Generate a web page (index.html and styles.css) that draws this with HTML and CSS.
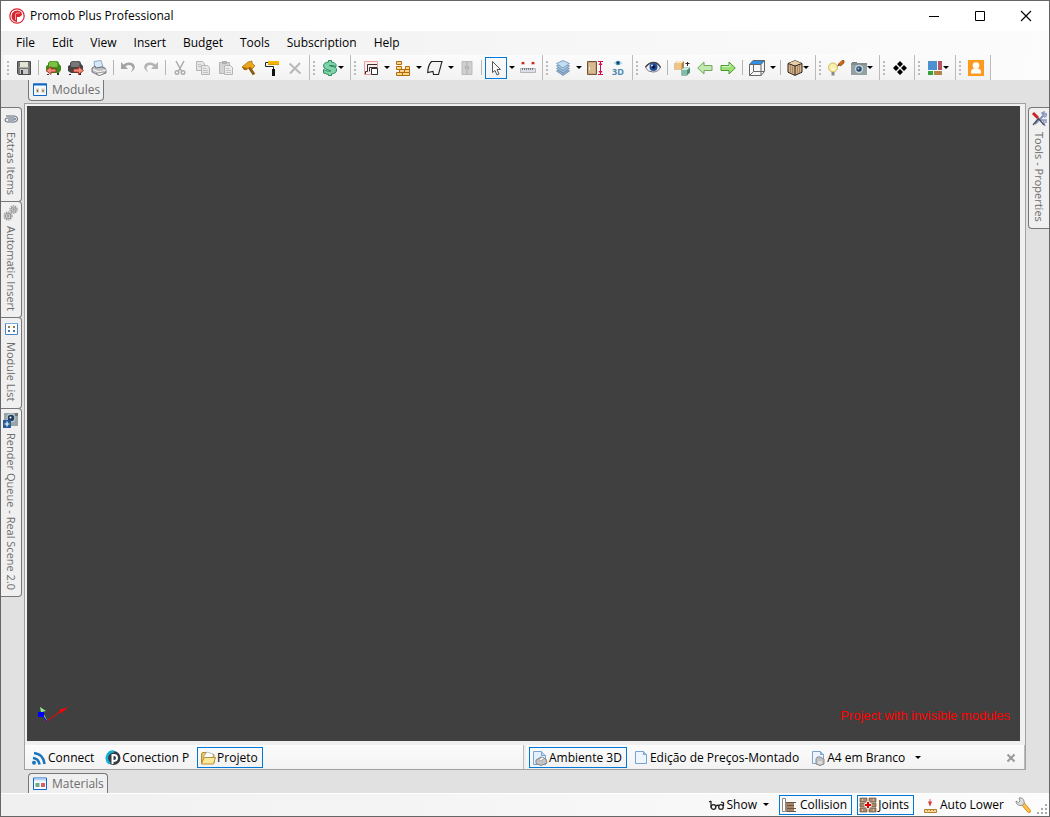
FILE: index.html
```
<!DOCTYPE html>
<html lang="en">
<head>
    <meta charset="UTF-8">
    <meta name="viewport" content="width=device-width, initial-scale=1.0">
    <title>Promob Plus Professional</title>
    <link rel="stylesheet" href="styles.css">
</head>
<body>
    <div class="window">
        <header class="titlebar">
            <svg class="icon" viewBox="0 0 16 16"><circle cx="8" cy="8" r="7.2" fill="#fff" stroke="#d8242f" stroke-width="1.2"/><path d="M6 13.500Q2.500 12 2.500 8 3 3 8 2.500q3 0 4.500 2L13 7 10.500 9H8v5z" fill="#d8242f"/><path d="M6.500 12V6.500Q6.500 5 8 5h3" fill="none" stroke="#f3a9ad" stroke-width="1"/></svg>
            <h1>Promob Plus Professional</h1>
            <div class="window-buttons">
                <button type="button" aria-label="Minimize"><svg class="icon" viewBox="0 0 16 16"><path d="M3 8.500h10" stroke="#000"/></svg></button>
                <button type="button" aria-label="Maximize"><svg class="icon" viewBox="0 0 16 16"><path d="M3.500 3.500h9v9h-9z" fill="none" stroke="#000"/></svg></button>
                <button type="button" aria-label="Close"><svg class="icon" viewBox="0 0 16 16"><path d="M3 3l10 10M13 3L3 13" stroke="#000" stroke-width="1.1"/></svg></button>
            </div>
        </header>

        <nav class="menubar">
            <button type="button">File</button>
            <button type="button">Edit</button>
            <button type="button">View</button>
            <button type="button">Insert</button>
            <button type="button">Budget</button>
            <button type="button">Tools</button>
            <button type="button">Subscription</button>
            <button type="button">Help</button>
        </nav>

        <div class="toolbar">
            <div class="group">
                <button type="button" class="tool" aria-label="Save"><svg class="icon" viewBox="0 0 16 16"><path d="M1.500 1.500h13v13h-12l-1-1z" fill="#777" stroke="#4c4c4c"/><path d="M4 2h8v5H4z" fill="#e4e4d4"/><path d="M4 9h8v5H4z" fill="#c9c9c9"/><path d="M5 10h2v4H5z" fill="#444"/><path d="M3 7.500h10" stroke="#aaa"/></svg></button>
                <span class="sep"></span>
                <button type="button" class="tool" aria-label="Import module"><svg class="icon" viewBox="0 0 16 16"><path d="M3 3q1-2 3-2h5q3 0 3 3l2 2v4l-2 3H4l-3-2V6l2-1z" fill="#3f8a1c"/><path d="M4 3q1-1.500 3-1.500h3q2 0 2.500 2V7H4z" fill="#79c142"/><path d="M3 14v1M13 13v2" stroke="#333" stroke-width="2"/><path d="M1 10.500L6 6.500V9h5v3H6v2.500z" fill="#f08c7c" stroke="#a32c1e" stroke-width=".8"/></svg></button>
                <button type="button" class="tool" aria-label="Export module"><svg class="icon" viewBox="0 0 16 16"><path d="M2 3q1-2 3-2h5q3 0 3 3l2 2v4l-2 3H3l-3-2V6l2-1z" fill="#444"/><path d="M3 3q1-1.500 3-1.500h3q2 0 2.500 2V7H3z" fill="#777"/><path d="M2 14v1M12 13v2" stroke="#222" stroke-width="2"/><path d="M15.500 10.500l-5-4V9h-5v3h5v2.500z" fill="#f08c7c" stroke="#a32c1e" stroke-width=".8"/></svg></button>
                <button type="button" class="tool" aria-label="Print"><svg class="icon" viewBox="0 0 16 16"><path d="M3 1.500l7-1 2 6-8 2z" fill="#d5e9fa" stroke="#7899b8" stroke-width=".8"/><path d="M1 8l3-2 .8 2L11 7l3 1 1 2v3l-7 2.500L1 12z" fill="#bfc1c3" stroke="#686b6e" stroke-width=".9"/><path d="M2 9.500l6 2.500 7-2" fill="none" stroke="#fff"/><path d="M5 13.500l7-1.500 2 1-6 2.500z" fill="#fff" stroke="#777" stroke-width=".7"/></svg></button>
                <span class="sep"></span>
                <button type="button" class="tool" aria-label="Undo"><svg class="icon" viewBox="0 0 16 16"><path d="M1 2v7h7L5.500 6.500Q9 4 11.500 6t-1 6.500Q16 9 14.500 5.500T8 2.500Q5.500 2.800 3.500 4.500z" fill="#a4a4a4"/></svg></button>
                <button type="button" class="tool" aria-label="Redo"><svg class="icon" viewBox="0 0 16 16"><path d="M15 2v7H8l2.500-2.500Q7 4 4.500 6t1 6.500Q0 9 1.500 5.500T8 2.500q2.500.3 4.500 2z" fill="#b3b3b3"/></svg></button>
                <span class="sep"></span>
                <button type="button" class="tool" aria-label="Cut"><svg class="icon" viewBox="0 0 16 16"><path d="M4 1l5.500 10M12 1L6.500 11" stroke="#aaa" stroke-width="1.500"/><g fill="none" stroke="#aaa" stroke-width="1.400"><circle cx="5" cy="12.500" r="1.800"/><circle cx="11" cy="12.500" r="1.800"/></g></svg></button>
                <button type="button" class="tool" aria-label="Copy"><svg class="icon" viewBox="0 0 16 16"><g fill="#e6e6e6" stroke="#b5b5b5"><path d="M1.500 1.500h6l2 2v7h-8z"/><path d="M6.500 5.500h6l2 2v7h-8z"/></g><path d="M3 4.500h3M3 6.500h3M8 8.500h3M8 10.500h5M8 12.500h5" stroke="#c4c4c4"/></svg></button>
                <button type="button" class="tool" aria-label="Paste"><svg class="icon" viewBox="0 0 16 16"><path d="M1.500 2.500h10v11h-10z" fill="#d4d4d4" stroke="#b5b5b5"/><path d="M4 1h5v3H4z" fill="#b0b0b0"/><path d="M6.500 5.500h6l2 2v7h-8z" fill="#ececec" stroke="#b5b5b5"/><path d="M8 8.500h3M8 10.500h5M8 12.500h5" stroke="#c4c4c4"/></svg></button>
                <button type="button" class="tool" aria-label="Build"><svg class="icon" viewBox="0 0 16 16"><path d="M8 7l5 7.500" stroke="#8b5b10" stroke-width="3"/><path d="M1 7l6-5 4-1v2l3 3-3 3-2-2-4 3-2-1z" fill="#eba51a" stroke="#9d6a0b" stroke-width=".7"/><path d="M1 7l2 3 2 0 2-2z" fill="#a56a08"/></svg></button>
                <button type="button" class="tool" aria-label="Paint"><svg class="icon" viewBox="0 0 16 16"><path d="M4 1h11v4H4z" fill="#f5b400"/><path d="M4 4.500h11" stroke="#d59a00"/><path d="M4 2.500H1.500v4H9.500V10" fill="none" stroke="#222"/><path d="M8 9h3v7H8z" fill="#111"/></svg></button>
                <button type="button" class="tool" aria-label="Delete"><svg class="icon" viewBox="0 0 16 16"><path d="M2.500 3.500l11 10M13 3L3 13.500" stroke="#b8b8b8" stroke-width="2"/></svg></button>
            </div>
            <div class="group">
                <button type="button" class="tool menu" aria-label="Budget"><svg class="icon" viewBox="0 0 16 16"><path d="M14 4.500Q12.500 2 9.500 2V.5h-3V2Q1.500 2.500 1.500 6q0 2.500 3.500 3.500l4 1.500L5 11 1.500 9.500V13l5 1.500v1h3v-1.500q5-.5 5-4T10 6.500L7 5.500l4 0 3 1.500z" fill="#7fd3a8" stroke="#2b8a5f"/></svg></button>
            </div>
            <div class="group">
                <button type="button" class="tool" aria-label="Walls"><svg class="icon" viewBox="0 0 16 16"><path d="M1.500 1.500h13v13h-13z" fill="#fbeeee" stroke="#f09a9a"/><path d="M2.500 14V11.500h2v-7H14M6.500 11.500v-4H14" fill="none" stroke="#333"/><path d="M8.500 8.500h6v6h-6z" fill="#fff" stroke="#333"/></svg></button>
                <button type="button" class="arrow" aria-label="Wall options"></button>
                <button type="button" class="tool" aria-label="Masonry"><svg class="icon" viewBox="0 0 16 16"><g fill="#fbd58c" stroke="#b06c08"><path d="M1.500 1.500h5v3h-5zM1.500 6.500h5v3h-5zM10.500 6.500h4v3h-4zM4.500 9.500h5v3h-5zM9.500 9.500h5v3h-5zM1.500 12.500h6v3h-6zM7.500 12.500h7v3h-7z"/></g></svg></button>
                <button type="button" class="arrow" aria-label="Masonry options"></button>
                <button type="button" class="tool" aria-label="Floor"><svg class="icon" viewBox="0 0 16 16"><path d="M4.500 1.500h10.500l-3.500 13H6.500l-.5-3L.7 12.500Q1 5 4.500 1.500z" fill="#f3f3f3" stroke="#222" stroke-width="1.100"/></svg></button>
                <button type="button" class="arrow" aria-label="Floor options"></button>
                <button type="button" class="tool" aria-label="Opening"><svg class="icon" viewBox="0 0 16 16"><path d="M3 1.500h10v13H3z" fill="#cfcfcf" stroke="#bbb"/><path d="M8 2v12M6.500 6v3M9.500 6v3" stroke="#aaa"/></svg></button>
                <span class="sep"></span>
                <button type="button" class="tool active" aria-label="Select"><svg class="icon" viewBox="0 0 16 16"><path d="M4.500 1.500v11l2.500-2 2 4.500 2-1-2-4.500h3.500z" fill="#fff" stroke="#555"/></svg></button>
                <button type="button" class="arrow" aria-label="Select options"></button>
                <button type="button" class="tool" aria-label="Measure"><svg class="icon" viewBox="0 0 16 16"><path d="M1 3.500h4M11 3.500h4" stroke="#e9b0b0" stroke-width="2"/><circle cx="3" cy="3" r="1.300" fill="#c22"/><circle cx="13" cy="3" r="1.300" fill="#c22"/><path d="M.5 8.500h15v4H.5z" fill="#dedee4" stroke="#b5b5bd"/><path d="M2.500 8v2M4.500 8v2M6.500 8v2M8.500 8v2M10.500 8v2M12.500 8v2" stroke="#778"/></svg></button>
            </div>
            <div class="group">
                <button type="button" class="tool" aria-label="Layers"><svg class="icon" viewBox="0 0 16 16"><g stroke="#6c8db0" stroke-width=".8"><path d="M1.500 11L8 8l6.500 3L8 15.500z" fill="#8fadc9"/><path d="M1.500 8.500L8 5l6.500 3.500L8 13z" fill="#9dbcd9"/><path d="M1.500 6L8 3l6.500 3L8 10.500z" fill="#aacbe8"/><path d="M1.500 3.500L8 .5l6.500 3L8 8z" fill="#c3ddf3"/></g></svg></button>
                <button type="button" class="arrow" aria-label="Layer options"></button>
                <button type="button" class="tool" aria-label="Door height"><svg class="icon" viewBox="0 0 16 16"><path d="M.5 1.500h9v13h-9z" fill="#c9a679" stroke="#765432"/><path d="M2 3h6v10H2z" fill="#d8bb93"/><path d="M2.500 7v3" stroke="#eee"/><path d="M11 1.500h5M11 14.500h5M13.500 2v12" stroke="#d40f4f"/><path d="M13.500 2l2 3h-4zM13.500 14l2-3h-4z" fill="#d40f4f"/></svg></button>
                <button type="button" class="tool" aria-label="View in 3D"><svg class="icon" viewBox="0 0 16 16"><path d="M3 3q5-4 10 0-5 4-10 0z" fill="#b9dff0"/><circle cx="8" cy="3" r="2.300" fill="#4087ae"/><circle cx="8" cy="2.800" r="1" fill="#123"/><text class="icon-text" x="2" y="15">3D</text></svg></button>
            </div>
            <div class="group">
                <button type="button" class="tool" aria-label="Visibility"><svg class="icon" viewBox="0 0 16 16"><path d="M.5 8Q3 3 8.500 3t7 4.500Q13 12 8 12T.5 8z" fill="#eef2f8" stroke="#777"/><path d="M.5 7Q4 2.500 8.500 2.500t7 5" fill="none" stroke="#444" stroke-width="1.300"/><circle cx="8.500" cy="7" r="4" fill="#264f9b"/><circle cx="8.500" cy="7" r="1.800" fill="#081530"/><circle cx="7" cy="5.500" r="1" fill="#c7dcff"/></svg></button>
                <span class="sep"></span>
                <button type="button" class="tool" aria-label="Replace"><svg class="icon" viewBox="0 0 16 16"><path d="M.5 3.500L3 1h7v6.500L7.500 10h-7z" fill="#b98545"/><path d="M.5 3.500h7V10h-7z" fill="#edc48a"/><path d="M.5 3.500L3 1h7L7.500 3.500z" fill="#ffe6bd"/><path d="M7.500 10L10 7.500h6v5L13 15.500H7.500z" fill="#4f8c74"/><path d="M7.500 10H13v5.500H7.500z" fill="#83bca4"/><path d="M7.500 10L10 7.500h6L13 10z" fill="#c9ecde"/><path d="M11.500 3.500h4M13.500 2v4" stroke="#222"/></svg></button>
                <button type="button" class="tool" aria-label="Previous"><svg class="icon" viewBox="0 0 16 16"><path d="M.7 8L7 2v3.500h8v5H7V14z" fill="#c5e8b3" stroke="#6faa5b"/></svg></button>
                <button type="button" class="tool" aria-label="Next"><svg class="icon" viewBox="0 0 16 16"><path d="M15.300 8L9 2v3.500H1v5h8V14z" fill="#9be078" stroke="#4b9a31"/><path d="M2 6.500h8V4" fill="none" stroke="#d5f5c5"/></svg></button>
                <span class="sep"></span>
                <button type="button" class="tool" aria-label="Top view"><svg class="icon" viewBox="0 0 16 16"><path d="M4 .5h11.500L12 4.500H.5z" fill="#2d8fe8"/><path d="M.5 4.500H12v11H.5zM4 .5h11.500L12 4.500H.5zM15.500.5v11L12 15.500M4.500 5v6.500H15M4.500 11.500L1 15" fill="none" stroke="#666"/></svg></button>
                <button type="button" class="arrow" aria-label="View options"></button>
                <span class="sep"></span>
                <button type="button" class="tool menu" aria-label="Textures"><svg class="icon" viewBox="0 0 16 16"><path d="M1 3.500L8 .7l7 2.800v8.700l-7 3.200-7-3.200z" fill="#d3b28a" stroke="#2b2118"/><path d="M1 3.500L8 .7l7 2.800L8 6z" fill="#ead0a9"/><path d="M1 3.500L8 6l7-2.500M8 6v9" fill="none" stroke="#2b2118"/><path d="M3.500 5.500v7M5.500 6.500v7M10.500 6v7.500M12.500 5v8" stroke="#9b7b59" stroke-width=".8"/></svg></button>
            </div>
            <div class="group">
                <button type="button" class="tool" aria-label="Lighting"><svg class="icon" viewBox="0 0 16 16"><circle cx="5" cy="7.500" r="4.500" fill="#f8eeb0" stroke="#d1b94f"/><path d="M3.500 8L5 10l1.500-2" fill="none" stroke="#fff"/><path d="M3.500 12h3v3.500h-3z" fill="#888"/><path d="M9 6.500l2-3 1.500 1.500z" fill="#333"/><path d="M10.500 4L14 .5h2V3l-3.500 3z" fill="#d66c13" stroke="#7b3905" stroke-width=".7"/></svg></button>
                <button type="button" class="tool menu" aria-label="Render"><svg class="icon" viewBox="0 0 16 16"><path d="M1 2h5v2H1z" fill="#777f80"/><path d="M0 3h16v12H0z" fill="#93a1a3"/><path d="M0 3h16v2H0z" fill="#7f8e8e"/><circle cx="8" cy="9" r="4.200" fill="#c7d6dc"/><circle cx="8" cy="9" r="2.700" fill="#29496a"/><circle cx="7.500" cy="8.500" r="1" fill="#9bd"/></svg></button>
            </div>
            <div class="group">
                <button type="button" class="tool" aria-label="Move"><svg class="icon" viewBox="0 0 16 16"><path d="M8 1l3 3-3 3-3-3zM4 5l3 3-3 3-3-3zM12 5l3 3-3 3-3-3zM8 9l3 3-3 3-3-3z" fill="#000"/></svg></button>
            </div>
            <div class="group">
                <button type="button" class="tool menu" aria-label="Window layout"><svg class="icon" viewBox="0 0 16 16"><path d="M1 1h9v9H1z" fill="#4b91d2"/><path d="M11 1h4v9h-4z" fill="#ba5360"/><path d="M1 11h5v4H1z" fill="#38a13d"/><path d="M7 11h8v4H7z" fill="#b18645"/></svg></button>
            </div>
            <div class="group">
                <button type="button" class="tool" aria-label="Account"><svg class="icon" viewBox="0 0 16 16"><path d="M0 0h16v16H0z" fill="#fc9a1e"/><circle cx="8" cy="5.500" r="3.300" fill="#fff"/><path d="M3 13.500V12q0-3 3-3.500h4q3 .5 3 3.500v1.500z" fill="#fff"/></svg></button>
            </div>
        </div>

        <div class="workspace">
            <div class="strip strip-top">
                <button type="button" class="tab tab-down"><svg class="icon" viewBox="0 0 16 16"><path d="M1.500 2h13v11.500h-13z" fill="#f4faff" stroke="#1267c4"/><path d="M1 2.500h14" stroke="#1267c4" stroke-width="2"/><path d="M4 6.500h3v4H4zM9.500 6.500h3v4h-3z" fill="#d9c7a4"/><path d="M5 8h1v2H5zM10.500 8h1v2h-1z" fill="#665"/></svg>Modules</button>
            </div>

            <div class="middle">
                <div class="side side-left">
                    <button type="button" class="tab tab-right"><svg class="icon" viewBox="0 0 16 16"><path d="M3 5h8.500q3 0 3 3t-3 3H4.500Q2 11 2 9t2.500-2H11q1.500 0 1.500 1T11 9H5" fill="none" stroke="#566579"/></svg>Extras Items</button>
                    <button type="button" class="tab tab-right"><svg class="icon" viewBox="0 0 16 16"><g fill="none" stroke="#999" stroke-width="1.200"><circle cx="10.500" cy="4.500" r="3.700" stroke-dasharray="1.500 .8"/><circle cx="10.500" cy="4.500" r="2.500"/><circle cx="10.500" cy="4.500" r=".8"/><circle cx="5" cy="11" r="4" stroke-dasharray="1.500 .8"/><circle cx="5" cy="11" r="2.700"/><circle cx="5" cy="11" r=".8"/></g></svg>Automatic Insert</button>
                    <button type="button" class="tab tab-right"><svg class="icon" viewBox="0 0 16 16"><path d="M2.500 2.500h12v11h-12z" fill="#fff" stroke="#4a86c5"/><path d="M2 2.500h13" stroke="#76aee2"/><path d="M5 5h2v2H5zM10 5h2v2h-2z" fill="#8b7a4f"/><path d="M5 9h2v2H5zM10 9h2v2h-2z" fill="#4777aa"/></svg>Module List</button>
                    <button type="button" class="tab tab-right"><svg class="icon" viewBox="0 0 16 16"><path d="M1 1h14v13H1z" fill="#98a5a6"/><path d="M12 1h3v3h-3z" fill="#687878"/><circle cx="8" cy="6" r="4.500" fill="#c5d4da"/><circle cx="8" cy="6" r="3.300" fill="#223c5d"/><circle cx="7.500" cy="5.500" r="1" fill="#fff"/><path d="M0 8h8v8H0z" fill="#245c99"/><path d="M4 9.500v5M1.500 12h5" stroke="#fff" stroke-width="1.200"/></svg>Render Queue - Real Scene 2.0</button>
                </div>

                <main class="document">
                    <div class="viewport">
                        <svg class="axes" viewBox="0 0 32 18"><path d="M10 15L4 4" stroke="#90ee90"/><path d="M3 1l6 4-5 1z" fill="#90ee90"/><path d="M10 15L5 9" stroke="#00f"/><path d="M1 6h6v5H1z" fill="#00f"/><path d="M10 15L24 5" stroke="#f00"/><path d="M31 1l-9 3 2 3.500z" fill="#f00"/></svg>
                        <p class="notice">Project with invisible modules</p>
                    </div>
                    <div class="doc-bars">
                        <div class="doc-bar">
                            <button type="button" class="doc-tab"><svg class="icon" viewBox="0 0 16 16"><g fill="none" stroke="#1b75bd" stroke-width="2.600"><path d="M2 8q5.500.5 6.500 6.500M3 3q9.500 1 10.500 11"/></g><circle cx="3" cy="12.800" r="2" fill="#1b75bd"/></svg>Connect</button>
                            <button type="button" class="doc-tab"><svg class="icon" viewBox="0 0 16 16"><circle cx="8.500" cy="8" r="7" fill="#333b44"/><path d="M9 1.500a6.500 6.500 0 0 0-4 12" fill="none" stroke="#12b0d6" stroke-width="2.600"/><path d="M7.500 14V5H9q3 0 3 3t-4 3" fill="none" stroke="#fff" stroke-width="2"/></svg>Conection P</button>
                            <button type="button" class="doc-tab active"><svg class="icon" viewBox="0 0 16 16"><path d="M1.500 13V3.500l1-1h4l1.500 2h6V13z" fill="#e6c45e" stroke="#b08e35"/><path d="M4 6l3-4 6 2v5H4z" fill="#fff" stroke="#aaa" stroke-width=".7"/><path d="M1.500 14L4 7.500h11.500l-2 6.500z" fill="#fce89a" stroke="#b3913a"/></svg>Projeto</button>
                        </div>
                        <div class="doc-bar">
                            <button type="button" class="doc-tab active"><svg class="icon" viewBox="0 0 16 16"><path d="M1.500 1.500h8l4 4v9h-12z" fill="#e3f0ff" stroke="#7ba3d0"/><path d="M9.500 1.500v4h4" fill="#bad6ef" stroke="#7ba3d0"/><path d="M4 10l5-3 5 2 1 4-6 2.500-5-2z" fill="#c4c4c4" stroke="#858585"/><path d="M7 9l4-2 1 2-4 2z" fill="#fff" stroke="#888" stroke-width=".6"/></svg>Ambiente 3D</button>
                            <button type="button" class="doc-tab"><svg class="icon" viewBox="0 0 16 16"><path d="M2.500 1.500h8l3 3v9h-11z" fill="#edf6ff" stroke="#7ba3d0"/><path d="M10.500 1.500v3h3" fill="#9fc4e8" stroke="#7ba3d0"/></svg>Edição de Preços-Montado</button>
                            <button type="button" class="doc-tab"><svg class="icon" viewBox="0 0 16 16"><path d="M2.500 1.500h8l3 3v9h-11z" fill="#edf6ff" stroke="#7ba3d0"/><path d="M10.500 1.500v3h3" fill="#9fc4e8" stroke="#7ba3d0"/><path d="M6 10q0-4 4-3l4 2v5l-4 1.500L6 14z" fill="#c0c2c5" stroke="#8b8b8b"/><path d="M8 11h4v3H8z" fill="#ddd"/></svg>A4 em Branco</button>
                            <button type="button" class="arrow" aria-label="More documents"></button>
                            <button type="button" class="doc-close" aria-label="Close document"><svg class="icon" viewBox="0 0 16 16"><path d="M4.500 4.500l7 7M11.500 4.500l-7 7" stroke="#999" stroke-width="2"/></svg></button>
                        </div>
                    </div>
                </main>

                <div class="side side-right">
                    <button type="button" class="tab tab-left"><svg class="icon" viewBox="0 0 16 16"><path d="M4 13l9-9" stroke="#8291b8" stroke-width="2"/><path d="M13 5l-2-3 2-1v2l2 0 0-1q1 4-2 4M12 9l2 6M9 9h6v3" fill="none" stroke="#8a98bd" stroke-width="1.500"/><path d="M2 2l5 5" stroke="#c92525" stroke-width="3"/><path d="M7 7l6 7M2 14l5-6" stroke="#444c5e" stroke-width="1.200"/></svg>Tools - Properties</button>
                </div>
            </div>

            <div class="strip strip-bottom">
                <button type="button" class="tab tab-up"><svg class="icon" viewBox="0 0 16 16"><path d="M1.500 2h13v11.500h-13z" fill="#f4faff" stroke="#1267c4"/><path d="M2 3.500h12" stroke="#b6d6f5" stroke-width="2"/><path d="M3.500 7h4v4h-4z" fill="#70a98e"/><path d="M9 7h4v4H9z" fill="#d16262"/></svg>Materials</button>
            </div>
        </div>

        <footer class="statusbar">
            <button type="button" class="status"><svg class="icon" viewBox="0 0 16 16"><g fill="none" stroke="#222" stroke-width="1.300"><path d="M2 4v6.500M7 9q2-1.500 3 0M14.500 9V6L12 5"/><circle cx="4.500" cy="10" r="2.300"/><circle cx="12" cy="10" r="2.300"/><path d="M0 5l2-1"/></g></svg>Show<i class="caret"></i></button>
            <button type="button" class="status active"><svg class="icon" viewBox="0 0 16 16"><path d="M.5 1.500h3v13h-3z" fill="#fff" stroke="#888"/><path d="M4 5h8v10H4z" fill="#a58366"/><path d="M4 5.500h10M5 8.500h7M5 11.500h9M5 14.500h9" stroke="#6d5440"/></svg>Collision</button>
            <button type="button" class="status active"><svg class="icon" viewBox="0 0 16 16"><path d="M0 1h7v4H0zM9 1h7v4H9zM0 6h7v4H0zM9 6h7v4H9zM0 11h7v4H0zM9 11h7v4H9z" fill="#a98a6e" stroke="#5d432f" stroke-width=".6"/><path d="M2 3h1M13 3h1M2 13h1M13 13h1" stroke="#fff"/><path d="M8 4.500v7M4.500 8h7" stroke="#fff" stroke-width="4"/><path d="M8 5v6M5 8h6" stroke="#e00000" stroke-width="2.200"/></svg>Joints</button>
            <button type="button" class="status"><svg class="icon" viewBox="0 0 16 16"><path d="M8 2v7" stroke="#d66" stroke-width="1"/><path d="M6 4.500h4L9 7 8 9 7 7z" fill="#d33"/><path d="M2.500 12.500h12v3h-12z" fill="#fbd993" stroke="#b58033"/><path d="M5.500 13v1M8.500 13v1M11.500 13v1" stroke="#b98535"/></svg>Auto Lower</button>
            <button type="button" class="status settings" aria-label="Settings"><svg class="icon" viewBox="0 0 16 16"><path d="M8 7l6 7" stroke="#d38a14" stroke-width="4" stroke-linecap="round"/><path d="M8 7l6 7" stroke="#ffc04e" stroke-width="2.500" stroke-linecap="round"/><path d="M1 4l2.500 1.500L5 4 4 1q4-1 5 3t-3 4.500Q1 8.500 1 4z" fill="#ddd" stroke="#8b8b8b" stroke-width=".9"/></svg></button>
            <svg class="size-grip" viewBox="0 0 11 11"><path d="M8 0h2v2H8zM4 4h2v2H4zM8 4h2v2H8zM0 8h2v2H0zM4 8h2v2H4zM8 8h2v2H8z" fill="#aaa"/></svg>
        </footer>
    </div>
</body>
</html>
```

FILE: styles.css
```
* {
    box-sizing: border-box;
}

body {
    margin: 0;
    font-family: "Open Sans", "Noto Sans", sans-serif;
    font-size: 12px;
    line-height: 16px;
    color: #000;
}

button {
    display: flex;
    align-items: center;
    margin: 0;
    padding: 0;
    border: 1px solid transparent;
    background: none;
    font: inherit;
    color: inherit;
    white-space: nowrap;
}

.icon {
    display: block;
    flex: none;
    width: 16px;
    height: 16px;
    overflow: visible;
}

.icon-text {
    font-size: 9px;
    font-weight: bold;
    fill: #4b84ad;
}

.window {
    display: flex;
    flex-direction: column;
    height: 100vh;
    border: 1px solid #666;
    background: #e1e1e1;
}

/* Title bar and menu */
.titlebar {
    display: flex;
    align-items: center;
    gap: 5px;
    height: 30px;
    padding-left: 8px;
    background: #fff;
}

.titlebar h1 {
    flex: 1;
    margin: 0;
    font-size: 12px;
    font-weight: normal;
}

.window-buttons {
    display: flex;
}

.window-buttons button {
    justify-content: center;
    width: 46px;
    height: 30px;
}

.menubar {
    display: flex;
    gap: 1px;
    height: 24px;
    padding-left: 7px;
    background: linear-gradient(to right, #f0f0f0, #fcfcfc);
}

.menubar button {
    padding: 0 7px;
}

/* Toolbar */
.toolbar {
    display: flex;
    height: 25px;
    padding-left: 3px;
    background: linear-gradient(to right, #f4f4f4, #fcfcfc);
}

.group {
    display: flex;
    align-items: center;
    padding-right: 3px;
    border-right: 1px solid #bbb;
    background: linear-gradient(to bottom, #fcfcfc, #f2f2f2);
}

.group::before {
    content: "";
    width: 2px;
    height: 14px;
    margin: 0 3px;
    background: repeating-linear-gradient(to bottom, #bbb 0, #bbb 2px, transparent 2px, transparent 4px);
}

.tool {
    width: 22px;
    height: 22px;
    margin-left: 1px;
    padding-left: 2px;
}

.menu {
    gap: 0;
    width: 28px;
}

.active {
    border-color: #0078d7;
}

.arrow {
    justify-content: center;
    width: 9px;
    height: 22px;
}

.arrow::after,
.menu::after,
.caret {
    content: "";
    flex: none;
    border: 3px solid transparent;
    border-top-color: #000;
    border-bottom: 0;
}

.sep {
    width: 1px;
    height: 15px;
    margin: 0 2px 0 3px;
    background: #b5b5b5;
}

/* Docked panels round the document */
.workspace {
    display: flex;
    flex: 1;
    flex-direction: column;
    min-height: 0;
}

.strip {
    display: flex;
    height: 23px;
    padding-left: 27px;
}

.strip-bottom {
    align-items: flex-end;
}

.tab {
    gap: 4px;
    border: 1px solid #777;
    background: #f0f0f0;
    color: #6d6d6d;
}

.tab-down {
    height: 21px;
    padding: 0 3px;
    border-top: 0;
    border-radius: 0 0 4px 4px;
}

.tab-up {
    height: 20px;
    padding: 0 3px;
    border-bottom: 0;
    border-radius: 4px 4px 0 0;
}

.middle {
    display: flex;
    flex: 1;
    gap: 2px;
    min-height: 0;
}

.side {
    display: flex;
    flex-direction: column;
    padding-top: 4px;
}

.side .tab {
    gap: 5px;
    width: 21px;
    padding: 3px 0 6px;
    font-size: 11px;
    writing-mode: vertical-rl;
}

.side .tab + .tab {
    margin-top: -1px;
}

.tab-right {
    border-left: 0;
    border-radius: 0 4px 4px 0;
}

.tab-left {
    border-right: 0;
    border-radius: 4px 0 0 4px;
}

.document {
    display: flex;
    flex: 1;
    flex-direction: column;
    min-width: 0;
    border: 1px solid #a0a0a0;
    background: #f0f0f0;
}

.viewport {
    display: flex;
    flex: 1;
    align-items: flex-end;
    justify-content: space-between;
    margin: 2px 5px 4px 2px;
    padding: 0 10px 17px;
    background: #404040;
}

.axes {
    width: 32px;
    height: 18px;
}

.notice {
    margin: 0;
    font-family: "Liberation Sans", Arial, sans-serif;
    font-size: 13px;
    color: #f00;
}

.doc-bars {
    display: grid;
    grid-template-columns: 1fr 1fr;
    gap: 2px;
}

.doc-bar {
    display: flex;
    align-items: center;
    height: 24px;
    padding: 1px 0 0 3px;
    border-right: 1px solid #bbb;
    background: linear-gradient(to bottom, #fcfcfc, #f2f2f2);
}

.doc-tab {
    gap: 1px;
    height: 21px;
    margin-right: 3px;
    padding: 0 4px 0 2px;
}

.doc-close {
    margin: 0 4px 0 auto;
}

/* Status bar */
.statusbar {
    display: flex;
    align-items: center;
    justify-content: flex-end;
    gap: 5px;
    height: 23px;
    padding-bottom: 1px;
    border-top: 1px solid #fff;
    background: linear-gradient(to right, #f0f0f0, #fcfcfc);
}

.status {
    gap: 2px;
    height: 20px;
    padding: 0 4px 0 2px;
}

.caret {
    margin-left: 4px;
}

.settings {
    padding: 0;
}

.size-grip {
    align-self: flex-end;
    width: 11px;
    height: 11px;
    margin-right: 1px;
}
```
